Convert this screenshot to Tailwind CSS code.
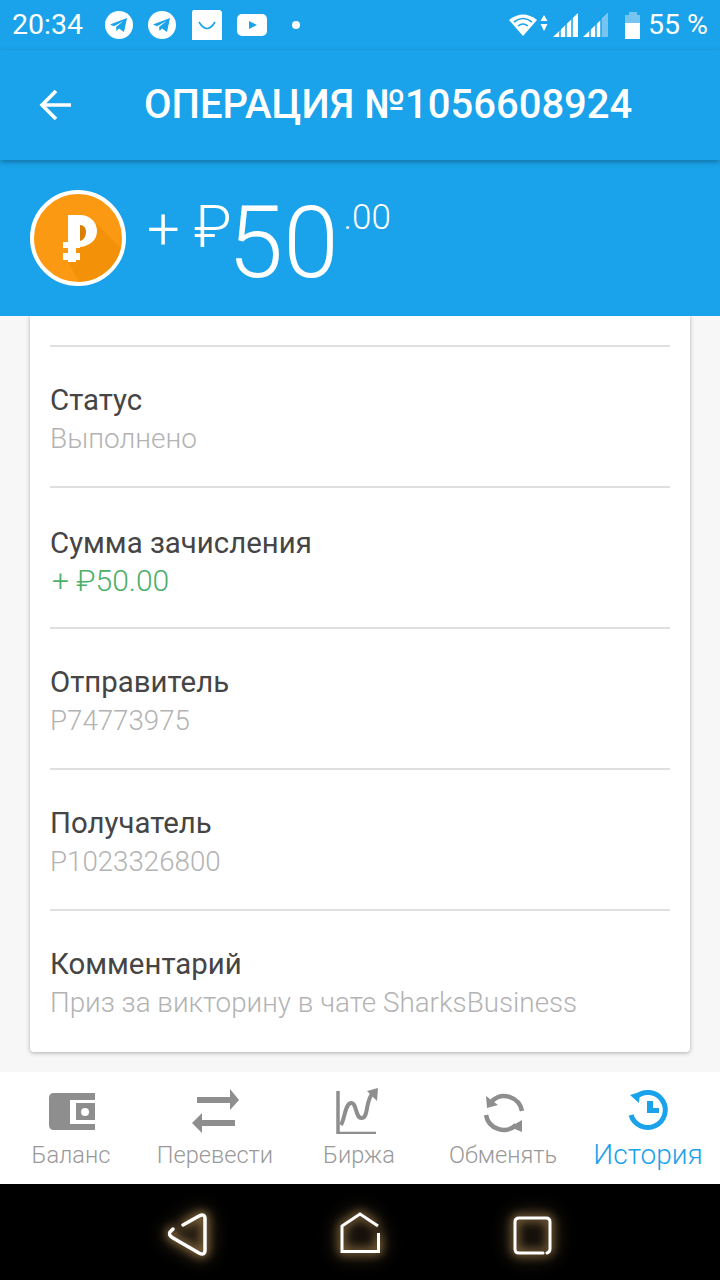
<!DOCTYPE html>
<html lang="en">
<head>
  <meta charset="UTF-8" />
  <title>Операция</title>
  <script src="https://cdn.jsdelivr.net/npm/@tailwindcss/browser@4"></script>
</head>
<body class="w-[720px] h-[1280px] overflow-hidden bg-[#f7f7f7] font-['Roboto',sans-serif]">

  <!-- Status bar -->
  <div class="h-[50px] bg-[#1aa3ea] flex items-center pl-[12px] pr-[12px] text-white">
    <span class="text-[28.5px] w-[72px] leading-none mt-[1px]">20:34</span>
    <div class="flex items-center gap-[15px] ml-[21px]">
      <svg width="28" height="28" viewBox="0 0 28 28"><circle cx="14" cy="14" r="14" fill="#fff"/><path d="M5 13.5 L22 7 L19 21 L14 17.5 L11.5 20 L11 16 L18.5 10 L9 15.2Z" fill="#1aa3ea"/></svg>
      <svg width="28" height="28" viewBox="0 0 28 28"><circle cx="14" cy="14" r="14" fill="#fff"/><path d="M5 13.5 L22 7 L19 21 L14 17.5 L11.5 20 L11 16 L18.5 10 L9 15.2Z" fill="#1aa3ea"/></svg>
      <svg width="30" height="30" viewBox="0 0 30 30" class="ml-[1px]"><path d="M1 0H28L30 2V30H0V2Z" fill="#fff"/><path d="M7 12Q15 25 23 12" fill="none" stroke="#1aa3ea" stroke-width="1.6"/></svg>
      <svg width="30" height="22" viewBox="0 0 30 22"><rect width="30" height="22" rx="5" fill="#fff"/><path d="M12 7L20 11L12 15Z" fill="#1aa3ea"/></svg>
    </div>
    <span class="w-[8px] h-[8px] rounded-full bg-white ml-[25px]"></span>
    <div class="ml-auto flex items-center">
      <svg width="40" height="26" viewBox="0 0 40 26"><path d="M0 8Q14 -3 28 8L14 24Z" fill="#fff"/><path d="M5 10Q14 3 23 10M9 14Q14 10 19 14" fill="none" stroke="#1aa3ea" stroke-width="1.6"/><path d="M35 3L38.5 9H31.5ZM35 19L38.5 12H31.5Z" fill="#fff"/></svg>
      <svg width="26" height="24" viewBox="0 0 26 24" class="ml-[4px]"><path d="M0 24L25 0V24Z" fill="#fff"/><path d="M7 24V16M13 24V10M19 24V5" stroke="#1aa3ea" stroke-width="1.5"/></svg>
      <svg width="26" height="24" viewBox="0 0 26 24" class="ml-[4px]"><path d="M0 24L25 0V24Z" fill="#fff"/><path d="M18 24V7L25 0V24Z" fill="#76c5f1"/><path d="M7 24V16M13 24V10M18 24V5" stroke="#1aa3ea" stroke-width="1.5"/></svg>
      <svg width="16" height="27" viewBox="0 0 16 27" class="ml-[16px]"><path d="M4 0H12V3H15V27H0V3H4Z" fill="#76c5f1"/><rect y="11" width="15" height="16" fill="#fff"/></svg>
      <span class="text-[28.5px] leading-none ml-[7px] mt-[1px]">55 %</span>
    </div>
  </div>

  <!-- Toolbar -->
  <div class="h-[110px] bg-[#1aa3ea] flex items-center text-white relative z-20 shadow-[0_2px_5px_rgba(0,0,0,0.3)]">
    <svg width="36" height="36" viewBox="0 0 36 36" class="ml-[38px] shrink-0"><path d="M33 18H4M18 4L4 18L18 32" fill="none" stroke="#fff" stroke-width="3.6"/></svg>
    <h1 class="ml-[70px] text-[40px] font-medium leading-none whitespace-nowrap">ОПЕРАЦИЯ №1056608924</h1>
  </div>

  <!-- Amount -->
  <div class="h-[156px] bg-[#1aa3ea] flex items-start text-white relative z-10">
    <div class="mt-[30px] ml-[30px] w-[96px] h-[96px] rounded-full bg-[#fb9a12] border-[4px] border-white overflow-hidden shrink-0">
      <svg width="88" height="88" viewBox="0 0 88 88">
        <path d="M63 30L88 55V88H45L34 68Z" fill="#f39208"/>
        <path d="M46 31C50 31 52 34 52 38C52 42 50 46 46 47Z" fill="#d97f02"/>
        <path d="M34 21H46C56 21 63 28 63 37C63 46 56 52 46 53V47C50 46 52 42 52 38C52 34 50 31 46 31V48H42V48H46V54H42V59H46V66H42V68H34V66H29V59H34V54H29V48H34Z" fill="#fff"/>
      </svg>
    </div>
    <span class="ml-[21px] mt-[40px] text-[58px] font-light leading-none">+</span>
    <span class="ml-[14px] mt-[37px] text-[59px] font-light leading-none tracking-[-5px]">₽</span>
    <span class="mt-[33px] ml-[1px] text-[100px] font-light leading-none">50</span>
    <span class="mt-[40px] ml-[5px] text-[35px] font-light leading-none">.00</span>
  </div>

  <!-- Details card -->
  <div class="mx-[30px] h-[736px] bg-white rounded-b-[4px] shadow-[0_1px_4px_rgba(0,0,0,0.3)] px-[20px] overflow-hidden">
    <div class="h-[31px] border-b-2 border-[#e0e0e0]"></div>
    <div class="h-[141px] border-b-2 border-[#e0e0e0] pt-[35px]">
      <p class="text-[29.4px] leading-[36px] text-[#454545]">Статус</p>
      <p class="text-[28px] leading-[42px] text-[#b3b3b3] font-light">Выполнено</p>
    </div>
    <div class="h-[141px] border-b-2 border-[#e0e0e0] pt-[37px]">
      <p class="text-[29.4px] leading-[36px] text-[#454545]">Сумма зачисления</p>
      <p class="text-[30px] leading-[40px] text-[#4caf68] font-light pl-[2px]">+ ₽50.00</p>
    </div>
    <div class="h-[141px] border-b-2 border-[#e0e0e0] pt-[35px]">
      <p class="text-[29.4px] leading-[36px] text-[#454545]">Отправитель</p>
      <p class="text-[27.7px] leading-[42px] text-[#b3b3b3] font-light">P74773975</p>
    </div>
    <div class="h-[141px] border-b-2 border-[#e0e0e0] pt-[35px]">
      <p class="text-[29.4px] leading-[36px] text-[#454545]">Получатель</p>
      <p class="text-[27.7px] leading-[42px] text-[#b3b3b3] font-light">P1023326800</p>
    </div>
    <div class="pt-[35px]">
      <p class="text-[29.4px] leading-[36px] text-[#454545]">Комментарий</p>
      <p class="text-[27.8px] leading-[42px] text-[#b3b3b3] font-light whitespace-nowrap">Приз за викторину в чате SharksBusiness</p>
    </div>
  </div>

  <!-- Bottom nav -->
  <div class="mt-[20px] h-[112px] bg-white grid grid-cols-5 text-[23.6px] font-light text-[#999]">
    <div class="flex flex-col items-center pt-[14px]">
      <svg width="48" height="48" viewBox="0 0 48 48"><path d="M6 7H47V14H22V38H47V44H6Q1 44 1 39V12Q1 7 6 7Z" fill="#8e8e8e"/><path d="M28 17H47V34H28Z" fill="#8e8e8e"/><circle cx="37" cy="26" r="4" fill="#fff"/></svg>
      <span class="leading-none mt-[10px] -ml-[2px]">Баланс</span>
    </div>
    <div class="flex flex-col items-center pt-[14px]">
      <svg width="48" height="48" viewBox="0 0 48 48"><path d="M5 11H38V3L47 14L38 24V17H5ZM43 34H10V27L0 37L10 47V40H43Z" fill="#8e8e8e"/></svg>
      <span class="leading-none mt-[10px] -ml-[2px]">Перевести</span>
    </div>
    <div class="flex flex-col items-center pt-[14px]">
      <svg width="48" height="48" viewBox="0 0 48 48"><path d="M2 5V47.5H40" fill="none" stroke="#8e8e8e" stroke-width="3.5"/><path d="M5 39C9 32 9 18 15 17C21 16 19 33 26 32C33 31 29 14 37 7" fill="none" stroke="#8e8e8e" stroke-width="4"/><path d="M31 5L42 2L41 15Z" fill="#8e8e8e"/></svg>
      <span class="leading-none mt-[10px] -ml-[2px]">Биржа</span>
    </div>
    <div class="flex flex-col items-center pt-[14px]">
      <svg width="48" height="48" viewBox="0 0 48 48"><path d="M12 15A18 18 0 0 1 42 25M6 29A18 18 0 0 0 36 39" fill="none" stroke="#8e8e8e" stroke-width="4.5"/><path d="M6 10L7 22L18 19ZM42 34L42 46L30 41Z" fill="#8e8e8e"/></svg>
      <span class="leading-none mt-[10px] -ml-[2px]">Обменять</span>
    </div>
    <div class="flex flex-col items-center pt-[14px] text-[#1aa3ea] text-[28px]">
      <svg width="48" height="48" viewBox="0 0 48 48"><path d="M12 11A17.5 17.5 0 1 1 7 29" fill="none" stroke="#1aa3ea" stroke-width="5"/><path d="M6 9L16 6L15 17Z" fill="#1aa3ea"/><path d="M23 15H29V22H35V27H23Z" fill="#1aa3ea"/></svg>
      <span class="leading-none mt-[7px]">История</span>
    </div>
  </div>

  <!-- Android nav -->
  <div class="h-[96px] bg-black flex items-start pl-[165px]">
    <svg width="46" height="50" viewBox="0 0 46 50" class="mt-[26px] overflow-visible [filter:drop-shadow(0_0_5px_rgba(255,200,120,0.9))_drop-shadow(0_0_9px_rgba(255,200,120,0.55))]"><path d="M18 15L34 6Q40 3 40 9V40Q40 46 34 43L8 28Q3 25 5 22L8 19" fill="none" stroke="#fff" stroke-width="3.5" stroke-linecap="round"/></svg>
    <svg width="44" height="46" viewBox="0 0 44 46" class="mt-[26px] ml-[127px] overflow-visible [filter:drop-shadow(0_0_5px_rgba(255,200,120,0.9))_drop-shadow(0_0_9px_rgba(255,200,120,0.55))]"><path d="M40 16L22 4L4 16V41.5H40.5V23" fill="none" stroke="#fff" stroke-width="3"/></svg>
    <svg width="41" height="41" viewBox="0 0 41 41" class="mt-[31px] ml-[130px] overflow-visible [filter:drop-shadow(0_0_5px_rgba(255,200,120,0.9))_drop-shadow(0_0_9px_rgba(255,200,120,0.55))]"><path d="M31 38H7Q3 38 3 34V7Q3 3 7 3H34Q38 3 38 7V34Q38 37 35 38" fill="none" stroke="#fff" stroke-width="3" stroke-linecap="round"/></svg>
  </div>

</body>
</html>
